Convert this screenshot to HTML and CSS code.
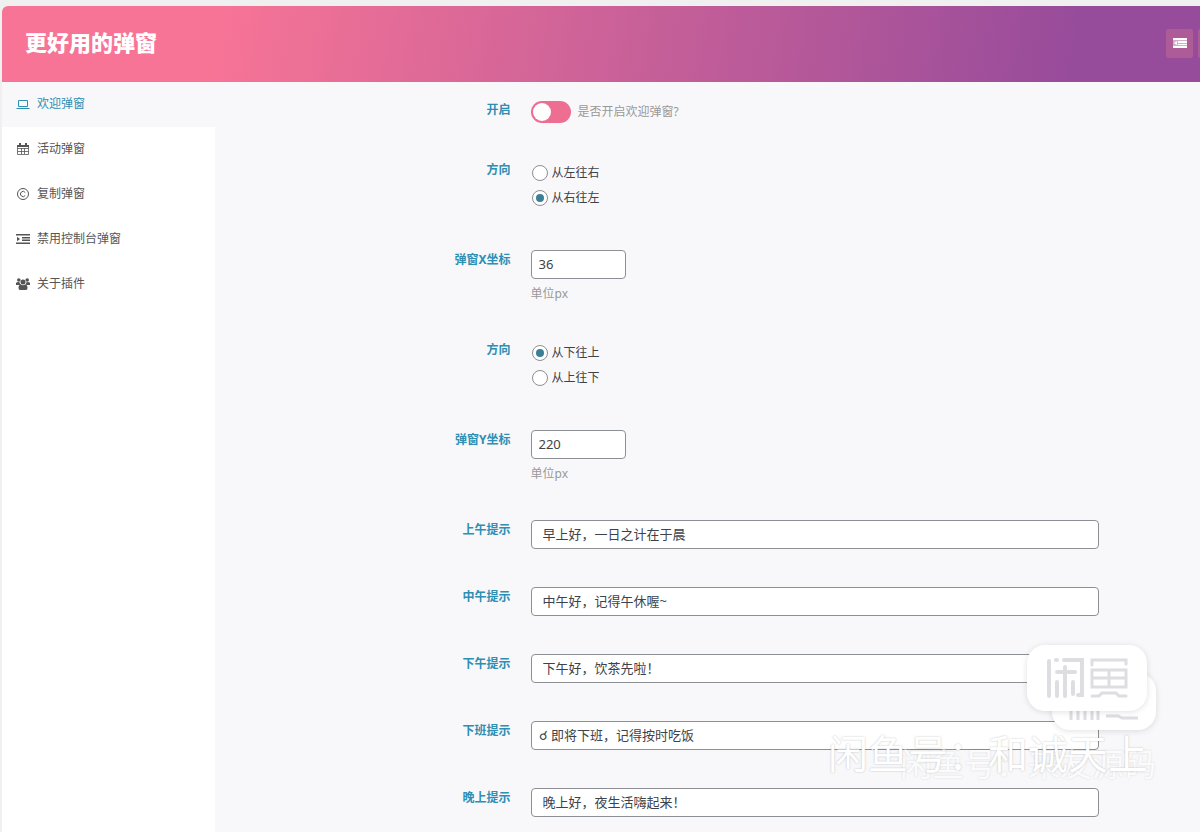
FILE: index.html
```
<!DOCTYPE html>
<html lang="zh-CN">
<head>
	<meta charset="UTF-8">
	<title>更好用的弹窗</title>
	<link rel="stylesheet" href="styles.css">
</head>
<body>
	<div class="options">
		<header class="header">
			<h1>更好用的弹窗</h1>
			<div class="header-btns">
				<button type="button" class="header-btn" aria-label="展开全部">
					<svg viewBox="0 0 14 12" width="14" height="12"><path d="M0 1h14v10H0z" fill="#fff" opacity=".5"/><path d="M0 1h14v2H0zM5 4h9v2H5zM5 7h9v1H5zM0 9h14v2H0zM4 4v4L1 6z" fill="#fff"/></svg>
				</button>
				<button type="button" class="header-btn" aria-label="保存"></button>
			</div>
		</header>
		<div class="main">
			<nav class="nav">
				<a href="#welcome" class="active">
					<svg viewBox="0 0 14 14"><path d="M2.500 3.500h9v6h-9zM.5 11.500h13" fill="none" stroke="currentColor"/></svg>
					欢迎弹窗
				</a>
				<a href="#activity">
					<svg viewBox="0 0 14 14"><path d="M1.500 3.500h11v9h-11zM1.500 6.500h11M1.500 9.500h11M5.500 6v6M8.500 6v6" fill="none" stroke="currentColor" stroke-width=".8"/><path d="M1 3h12v2H1zM3 1h2v3H3zM9 1h2v3H9z" fill="currentColor"/></svg>
					活动弹窗
				</a>
				<a href="#copy">
					<svg viewBox="0 0 14 14"><circle cx="7" cy="7" r="5.500" fill="none" stroke="currentColor"/><path d="M9.200 5.500a2.600 2.600 0 1 0 0 3" fill="none" stroke="currentColor"/></svg>
					复制弹窗
				</a>
				<a href="#console">
					<svg viewBox="0 0 14 14"><path d="M0 2h14v1.500H0zM6 5h8v1.500H6zM6 7.500h8V9H6zM0 10.500h14V12H0zM1 4.800v4.400L4 7z" fill="currentColor"/></svg>
					禁用控制台弹窗
				</a>
				<a href="#about">
					<svg viewBox="0 0 14 14" fill="currentColor"><circle cx="2.800" cy="3" r="1.800"/><circle cx="11.200" cy="3" r="1.800"/><circle cx="7" cy="5" r="2.500"/><path d="M0 8V6q1-1.500 3.500-.8Q3.800 7 5 8zM14 8V6q-1-1.500-3.500-.8Q10.200 7 9 8zM2.500 11q0-3.500 2.300-3.500 2.200 1.400 4.400 0 2.300 0 2.300 3.500 0 2-1.500 2H4q-1.500 0-1.500-2z"/></svg>
					关于插件
				</a>
			</nav>
			<form class="content">
				<div class="row row-switch">
					<label class="title" for="open">开启</label>
					<div class="field switch-line">
						<input type="checkbox" id="open" class="switch">
						<span class="desc">是否开启欢迎弹窗?</span>
					</div>
				</div>
				<div class="row row-tall">
					<span class="title" id="dir-x">方向</span>
					<div class="field" role="radiogroup" aria-labelledby="dir-x">
						<label class="radio"><input type="radio" name="dirx">从左往右</label>
						<label class="radio"><input type="radio" name="dirx" checked>从右往左</label>
					</div>
				</div>
				<div class="row row-tall">
					<label class="title" for="posx">弹窗X坐标</label>
					<div class="field">
						<input type="text" id="posx" class="text short" value="36">
						<p class="desc">单位px</p>
					</div>
				</div>
				<div class="row row-tall">
					<span class="title" id="dir-y">方向</span>
					<div class="field" role="radiogroup" aria-labelledby="dir-y">
						<label class="radio"><input type="radio" name="diry" checked>从下往上</label>
						<label class="radio"><input type="radio" name="diry">从上往下</label>
					</div>
				</div>
				<div class="row row-tall">
					<label class="title" for="posy">弹窗Y坐标</label>
					<div class="field">
						<input type="text" id="posy" class="text short" value="220">
						<p class="desc">单位px</p>
					</div>
				</div>
				<div class="row">
					<label class="title" for="morning">上午提示</label>
					<div class="field"><input type="text" id="morning" class="text" value="早上好，一日之计在于晨"></div>
				</div>
				<div class="row">
					<label class="title" for="noon">中午提示</label>
					<div class="field"><input type="text" id="noon" class="text" value="中午好，记得午休喔~"></div>
				</div>
				<div class="row">
					<label class="title" for="afternoon">下午提示</label>
					<div class="field"><input type="text" id="afternoon" class="text" value="下午好，饮茶先啦！"></div>
				</div>
				<div class="row">
					<label class="title" for="offwork">下班提示</label>
					<div class="field"><input type="text" id="offwork" class="text emoji" value="☌ 即将下班，记得按时吃饭"></div>
				</div>
				<div class="row">
					<label class="title" for="night">晚上提示</label>
					<div class="field"><input type="text" id="night" class="text" value="晚上好，夜生活嗨起来！"></div>
				</div>
			</form>
		</div>
	</div>
	<!-- 水印 -->
	<div class="mark">
		<div class="mark-card mark-card-back">
			<svg viewBox="0 0 70 36" width="70" height="36" fill="none" stroke="#dedee2" stroke-width="3">
				<path d="M2 24v12M9 24v12M16 24v12M23 24v12M29 24v12M37 32h12l4 2h16"/>
			</svg>
		</div>
		<div class="mark-card">
			<svg viewBox="0 0 82 42" width="82" height="42" fill="none" stroke="#dedee2" stroke-width="4" stroke-linecap="round">
				<path d="M3 4v35M10 3h1M18 3h18v35h-4M11 15h18M19 10v29M11 25v14M27 25v12"/>
				<path d="M46 8V3h34v4M46 13h34v17H46zM46 21h34M63 15v13M46 39h7l3-3h14l3 3h7" stroke-width="3"/>
			</svg>
		</div>
		<span class="mark-text mark-text-back">闲鱼号：来友源码</span>
		<span class="mark-text">闲鱼号：和诚天上</span>
	</div>
</body>
</html>
```
FILE: styles.css
```
*{margin:0;padding:0;box-sizing:border-box;}
body{background:#f0f0f1;color:#3c434a;font:12px/20px "Noto Sans","Noto Sans CJK SC",sans-serif;min-height:100vh;overflow:hidden;position:relative;}
.options{display:flex;flex-direction:column;min-height:100vh;padding:6px 0 0 2px;}
.header{display:flex;align-items:center;justify-content:space-between;height:76px;padding:0 0 2px 23px;border-radius:6px 0 0 0;background:linear-gradient(100deg,#f77496 18%,#964b9b 90%);overflow:hidden;}
.header h1{padding-bottom:2px;font-size:22px;line-height:32px;font-weight:900;color:#fff;}
.header-btns{display:flex;gap:5px;}
.header-btn{display:flex;align-items:center;justify-content:center;width:27px;height:29px;border:0;border-radius:3px;background:#ad5c98;}
.header-btn:last-child{width:2px;border-radius:3px 0 0 3px;}
.main{display:flex;flex:1;background:#f8f8fa;}
.nav{width:213px;background:#fff;}
.nav a{display:flex;align-items:center;gap:7px;height:45px;padding:0 14px 2px;color:#555;text-decoration:none;}
.nav a.active{background:#f8f8fa;color:#2e8fb3;}
.nav svg{width:14px;height:14px;}
.content{flex:1;}
.row{display:flex;gap:20px;padding:18px 0 20px;}
.row-tall{height:90px;}
.row-switch{height:60px;}
.title{width:30%;color:#2e8fb3;font-weight:700;text-align:right;}
.field{flex:1;padding-right:101px;}
.desc{color:#999;}
.switch-line{display:flex;align-items:center;gap:7px;height:24px;}
.switch{appearance:none;width:40px;height:22px;padding:2px;border-radius:11px;background:#ee6e92;}
.switch:before{content:"";display:block;width:18px;height:18px;border-radius:50%;background:#fff;}
.radio{display:flex;align-items:center;gap:4px;height:25px;}
.radio input{appearance:none;display:flex;width:16px;height:16px;margin-left:1px;border:1px solid #8c8f94;border-radius:50%;background:#fff;}
.radio input:checked:before{content:"";width:8px;height:8px;margin:auto;border-radius:50%;background:#3b7f96;}
.text{display:block;width:100%;height:29px;padding:0 11px 2px;border:1px solid #8c8f94;border-radius:4px;background:#fff;color:#3c434a;font:13px "Noto Sans","Noto Sans CJK SC",sans-serif;}
.text.short{width:95px;padding:0 7px 2px;}
.text.emoji{padding:0 7px 2px;}
.text.short+.desc{margin-top:5px;}
.mark{position:absolute;right:44px;bottom:50px;width:328px;height:144px;pointer-events:none;}
.mark-card{position:absolute;right:9px;top:2px;display:flex;align-items:center;justify-content:center;width:120px;height:66px;border-radius:18px;background:#fff;box-shadow:0 1px 6px rgba(0,0,0,.12);}
.mark-card-back{right:0;top:30px;width:104px;height:57px;}
.mark-text{position:absolute;left:0;top:83px;white-space:nowrap;font-size:40px;line-height:56px;color:#fff;text-shadow:0 0 2px rgba(0,0,0,.25);}
.mark-text-back{left:72px;top:93px;font-size:32px;opacity:.5;}
```
